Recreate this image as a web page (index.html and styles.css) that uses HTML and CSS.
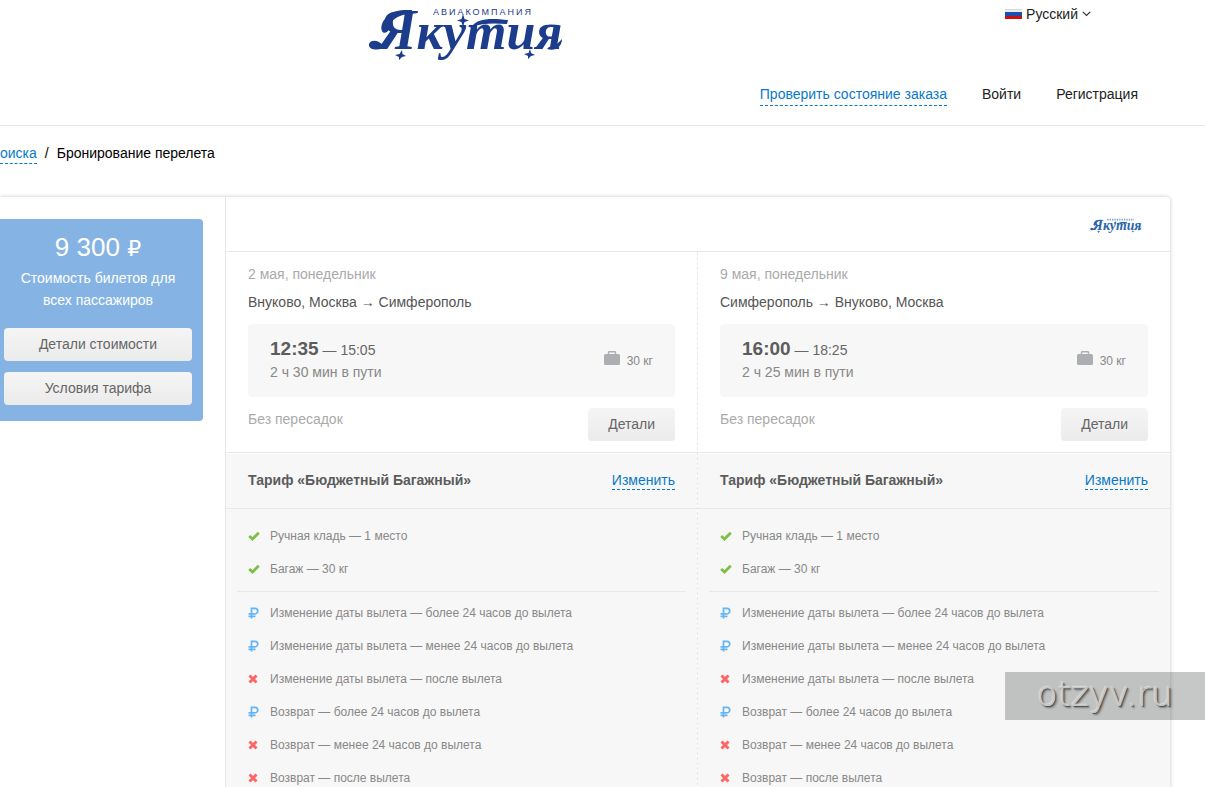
FILE: index.html
```
<!DOCTYPE html>
<html lang="ru">
<head>
<meta charset="utf-8">
<title>Бронирование перелета</title>
<link rel="stylesheet" href="styles.css">
</head>
<body>
<svg class="sprite" aria-hidden="true">
  <symbol id="logo-marks" viewBox="0 0 196 64">
    <g fill="currentColor">
      <path d="M103 27C110 18 122 18 140 20L139 24C126 23 114 23 103 27Z"/>
      <path d="M1 44C3 39 10 40 15 45L20 46C13 51 0 51 1 44ZM181 47C187 47 190 43 194 39C194 46 188 52 179 49Z"/>
      <path d="M14 31C11 23 20 11 36 10L44 10L43 14C30 14 21 21 21 29C20 33 15 34 14 31Z"/>
      <path d="M95 14L96.500 19L101 20.500L96.500 22L95 27L93.500 22L89 20.500L93.500 19Z"/>
      <path d="M34 50L34.500 54L38 56L34 57L31 60L31 57L27 55L31.500 54Z"/>
      <path d="M162 49L163 53L167 55L163 56L160 59L160 56L156 54L160.500 53Z"/>
    </g>
  </symbol>
  <symbol id="check" viewBox="0 0 12 10"><path d="M1.200 5L4.500 8L10.800 1.800" fill="none" stroke="#7fbf42" stroke-width="2.800"/></symbol>
  <symbol id="ruble" viewBox="0 0 12 12"><path d="M3.500 11.500V1.300H7A2.600 2.600 0 0 1 7 6.800H.500M.500 9.300H7.500" fill="none" stroke="#64b5f6" stroke-width="1.700"/></symbol>
  <symbol id="cross" viewBox="0 0 12 10"><path d="M1.500 1.500L8.500 8.500M8.500 1.500L1.500 8.500" fill="none" stroke="#ff6565" stroke-width="2.900"/></symbol>
  <symbol id="bag" viewBox="0 0 16 14"><rect y="3" width="16" height="11" rx="1.500" fill="#adaeb2"/><path d="M4.500 3V1.500Q4.500 .750 5.300 .750H10.700Q11.500 .750 11.500 1.500V3" fill="none" stroke="#adaeb2" stroke-width="1.400"/></symbol>
</svg>

<header class="header">
  <div class="header-top">
    <svg class="logo" viewBox="0 0 196 64" role="img" aria-label="Авиакомпания Якутия">
      <g fill="currentColor">
        <text class="logo-caption" x="65" y="15">АВИАКОМПАНИЯ</text>
        <text class="logo-name" x="10" y="49"><tspan class="logo-initial">Я</tspan>кутия</text>
      </g>
      <use href="#logo-marks"/>
    </svg>
    <button class="language" type="button">
      <svg class="flag" viewBox="0 0 17 10"><path fill="#eee" d="M0 0H17V4H0Z"/><path fill="#d8d8d8" d="M0 0H17V1H0Z"/><path fill="#1d4fb0" d="M0 3H17V7H0Z"/><path fill="#cf1010" d="M0 7H17V10H0Z"/></svg>
      <span>Русский</span>
      <svg class="chevron" viewBox="0 0 9 6"><path d="M.800 .800L4.500 4.500L8.200 .800" fill="none" stroke="#333" stroke-width="1.200"/></svg>
    </button>
  </div>
  <nav class="nav">
    <a class="link nav-order" href="#">Проверить состояние заказа</a>
    <a href="#">Войти</a>
    <a href="#">Регистрация</a>
  </nav>
</header>

<nav class="breadcrumbs">
  <a class="link" href="#">оиска</a><span>/</span><span>Бронирование перелета</span>
</nav>

<main class="card">
  <aside class="sidebar">
    <div class="price-box">
      <div class="price">9 300 <span class="currency">₽</span></div>
      <p class="price-note">Стоимость билетов для всех пассажиров</p>
      <button class="button" type="button">Детали стоимости</button>
      <button class="button" type="button">Условия тарифа</button>
    </div>
  </aside>
  <div class="content">
    <div class="airline">
      <svg class="airline-logo" viewBox="0 0 196 64" role="img" aria-label="Якутия">
        <g fill="currentColor">
          <text class="logo-name" x="10" y="49"><tspan class="logo-initial">Я</tspan>кутия</text>
          <path d="M65 10H166" stroke="currentColor" stroke-width="6" stroke-dasharray="5 4" opacity=".6"/>
        </g>
        <use href="#logo-marks"/>
      </svg>
    </div>
    <div class="trips">
      <section class="trip">
        <div class="flight">
          <div class="date">2 мая, понедельник</div>
          <div class="route">Внуково, Москва → Симферополь</div>
          <div class="time-box">
            <div>
              <div class="time"><b>12:35</b> — 15:05</div>
              <div class="duration">2 ч 30 мин в пути</div>
            </div>
            <div class="baggage"><svg class="bag"><use href="#bag"/></svg>30 кг</div>
          </div>
          <div class="flight-foot"><span class="stops">Без пересадок</span><button class="button" type="button">Детали</button></div>
        </div>
        <div class="tariff"><b>Тариф «Бюджетный Багажный»</b><a class="link" href="#">Изменить</a></div>
        <ul class="rules">
          <li><svg class="icon"><use href="#check"/></svg>Ручная кладь — 1 место</li>
          <li><svg class="icon"><use href="#check"/></svg>Багаж — 30 кг</li>
        </ul>
        <ul class="rules rules-change">
          <li><svg class="icon"><use href="#ruble"/></svg>Изменение даты вылета — более 24 часов до вылета</li>
          <li><svg class="icon"><use href="#ruble"/></svg>Изменение даты вылета — менее 24 часов до вылета</li>
          <li><svg class="icon"><use href="#cross"/></svg>Изменение даты вылета — после вылета</li>
          <li><svg class="icon"><use href="#ruble"/></svg>Возврат — более 24 часов до вылета</li>
          <li><svg class="icon"><use href="#cross"/></svg>Возврат — менее 24 часов до вылета</li>
          <li><svg class="icon"><use href="#cross"/></svg>Возврат — после вылета</li>
        </ul>
      </section>
      <section class="trip">
        <div class="flight">
          <div class="date">9 мая, понедельник</div>
          <div class="route">Симферополь → Внуково, Москва</div>
          <div class="time-box">
            <div>
              <div class="time"><b>16:00</b> — 18:25</div>
              <div class="duration">2 ч 25 мин в пути</div>
            </div>
            <div class="baggage"><svg class="bag"><use href="#bag"/></svg>30 кг</div>
          </div>
          <div class="flight-foot"><span class="stops">Без пересадок</span><button class="button" type="button">Детали</button></div>
        </div>
        <div class="tariff"><b>Тариф «Бюджетный Багажный»</b><a class="link" href="#">Изменить</a></div>
        <ul class="rules">
          <li><svg class="icon"><use href="#check"/></svg>Ручная кладь — 1 место</li>
          <li><svg class="icon"><use href="#check"/></svg>Багаж — 30 кг</li>
        </ul>
        <ul class="rules rules-change">
          <li><svg class="icon"><use href="#ruble"/></svg>Изменение даты вылета — более 24 часов до вылета</li>
          <li><svg class="icon"><use href="#ruble"/></svg>Изменение даты вылета — менее 24 часов до вылета</li>
          <li><svg class="icon"><use href="#cross"/></svg>Изменение даты вылета — после вылета</li>
          <li><svg class="icon"><use href="#ruble"/></svg>Возврат — более 24 часов до вылета</li>
          <li><svg class="icon"><use href="#cross"/></svg>Возврат — менее 24 часов до вылета</li>
          <li><svg class="icon"><use href="#cross"/></svg>Возврат — после вылета</li>
        </ul>
      </section>
    </div>
  </div>
</main>
<div class="watermark">otzyv.ru</div>
</body>
</html>
```
FILE: styles.css
```
* { box-sizing: border-box; }
body {
  position: relative;
  height: 100vh;
  margin: 0;
  overflow: hidden;
  background: #fff;
  color: #222;
  font: 14px/22px "Liberation Sans", Arial, sans-serif;
}
a { color: inherit; text-decoration: none; }
button { font: inherit; cursor: pointer; }
.sprite { position: absolute; width: 0; height: 0; }
.link { color: #0879c9; line-height: 18px; border-bottom: 1px dashed #0879c9; }

.header { border-bottom: 1px solid #e8e8e8; padding-bottom: 19px; }
.header-top { display: flex; justify-content: space-between; align-items: flex-start; padding: 0 114px 0 368px; }
.logo { width: 196px; height: 64px; color: #1c3c8c; }
.logo-caption { font: 9px "Liberation Sans", Arial, sans-serif; letter-spacing: 2px; }
.logo-name { font: italic bold 52px "Liberation Serif", serif; }
.logo-initial { font-size: 56px; }
.language { display: flex; align-items: center; gap: 4px; margin-top: 3px; padding: 0; border: 0; background: none; color: #222; }
.flag { width: 17px; height: 10px; }
.chevron { width: 9px; height: 6px; }
.nav { display: flex; justify-content: flex-end; align-items: flex-start; gap: 35px; padding: 19px 67px 0 0; }
.nav-order { line-height: 22px; }

.breadcrumbs { display: flex; align-items: flex-start; gap: 8px; padding: 17px 0 33px; color: #000; line-height: 20px; }
.breadcrumbs .link { line-height: 20px; }

.card { display: flex; margin-right: 35px; border-radius: 0 4px 0 0; box-shadow: 0 0 4px rgba(0, 0, 0, .22); }
.sidebar { flex: 0 0 225px; padding: 22px 22px 0 0; }
.price-box { display: flex; flex-direction: column; gap: 11px; padding: 14px 11px 16px 4px; border-radius: 0 4px 4px 0; background: #85b4e4; color: #fff; text-align: center; }
.price { font-size: 26px; line-height: 28px; }
.currency { font: 22px/22px "DejaVu Sans", sans-serif; }
.price-note { margin: -5px 0 6px; padding: 0 8px; }
.button { height: 33px; padding: 0 20px 2px; border: 0; border-radius: 4px; background: linear-gradient(#f5f5f5, #ebebeb); color: #666; }

.content { flex: 1; border-left: 1px solid #e8e8e8; }
.airline { display: flex; justify-content: flex-end; align-items: center; height: 55px; padding: 2px 28px 0 0; border-bottom: 1px solid #e8e8e8; }
.airline-logo { width: 52px; height: 17px; color: #2b66aa; }
.trips { display: grid; grid-template-columns: 1fr 1fr; }
.trip:first-child { border-right: 1px dashed #e8e8e8; }
.flight { padding: 11px 22px; border-bottom: 1px solid #e8e8e8; }
.date, .stops { color: #aaa; }
.route { margin: 6px 0 11px; color: #555; }
.time-box { display: flex; justify-content: space-between; align-items: center; height: 73px; padding: 0 22px; border-radius: 4px; background: #f7f7f7; color: #666; }
.time b { font-size: 19px; color: #5c5c5c; }
.duration { color: #888; }
.baggage { display: flex; align-items: center; gap: 7px; color: #888; font-size: 12px; }
.bag { width: 16px; height: 14px; margin-bottom: 5px; }
.flight-foot { display: flex; justify-content: space-between; align-items: flex-start; margin-top: 11px; }
.tariff { display: flex; justify-content: space-between; align-items: center; height: 55px; margin-top: 1px; padding: 0 22px 2px; border-bottom: 1px solid #e8e8e8; background: #f7f7f7; color: #5c5c5c; }
.rules { margin: 0; padding: 11px 11px 5px; background: #f7f7f7; color: #888; font-size: 12px; line-height: 33px; list-style: none; }
.rules-change { padding-top: 6px; background: linear-gradient(#e8e8e8, #e8e8e8) center top / calc(100% - 22px) 1px no-repeat #f7f7f7; }
.rules li { display: flex; align-items: center; gap: 10px; padding-left: 11px; }
.icon { width: 12px; height: 12px; margin-bottom: 2px; }

.watermark { position: absolute; right: 0; bottom: 67px; width: 200px; height: 48px; background: rgba(10, 20, 15, .235); color: #c4c6c5; font: 200 34px/44px "DejaVu Sans", sans-serif; text-align: center; text-shadow: -1px -1px 1px #dcdcdc, 1px 1px 1px #444, 2px 2px 2px #777; }
```
